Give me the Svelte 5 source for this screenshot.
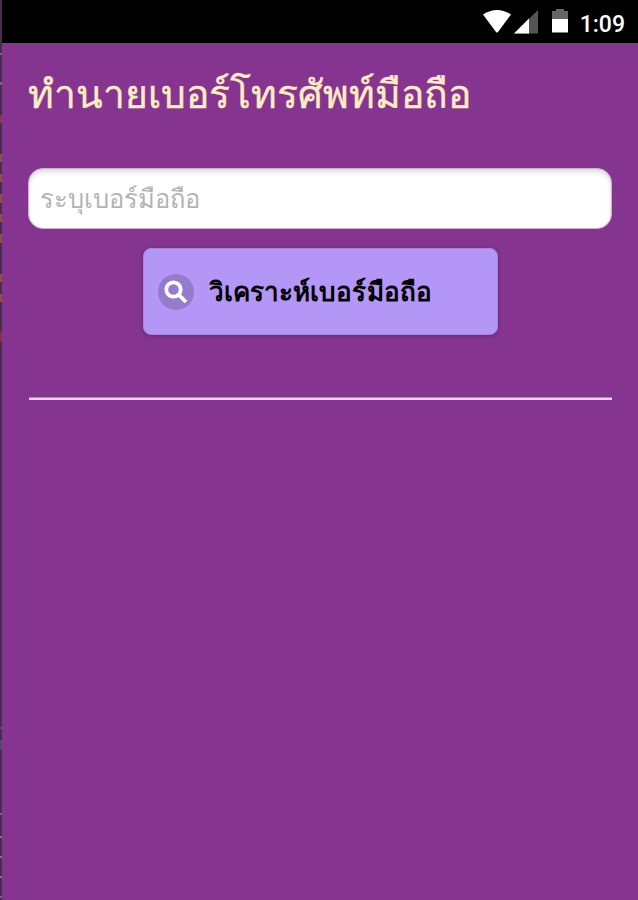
<script>
	let number = $state('');

	// marks along the strip on the left edge
	const marks = [
		{ y: 53, h: 2, color: '#75677b' },
		{ y: 82, h: 3, color: '#75677b' },
		{ y: 115, h: 8, color: '#89384f' },
		{ y: 154, h: 8, color: '#8a4f4b' },
		{ y: 174, h: 8, color: '#8a4f4b' },
		{ y: 194, h: 9, color: '#8a4f4b' },
		{ y: 214, h: 8, color: '#8a4f4b' },
		{ y: 234, h: 9, color: '#8a4f4b' },
		{ y: 274, h: 8, color: '#8a4f4b' },
		{ y: 294, h: 8, color: '#8a4f4b' },
		{ y: 332, h: 10, color: '#843150' },
		{ y: 727, h: 2, color: '#6c4577' },
		{ y: 740, h: 10, color: '#5b4767' },
		{ y: 813, h: 2, color: '#79607f' },
		{ y: 836, h: 2, color: '#8a758e' },
		{ y: 856, h: 2, color: '#8a758e' },
		{ y: 876, h: 2, color: '#8a758e' },
		{ y: 896, h: 2, color: '#79607f' }
	];
</script>

<div class="frame">
	<svg class="edge" width="2" height="900" viewBox="0 0 2 900">
		<rect width="2" height="900" fill="#4b2b52" />
		{#each marks as mark}
			<rect y={mark.y} width="2" height={mark.h} fill={mark.color} />
		{/each}
	</svg>

	<div class="app">
		<header class="status-bar">
			<svg width="90" height="30" viewBox="0 0 90 30">
				<path d="M1 6.5Q15-2.5 29 6.5L16 24Q15 25 14 24Z" fill="#fff" />
				<path d="M56 2V25.500H32Z" fill="#555" />
				<path d="M47 10.500V25.500H32Z" fill="#fff" />
				<path d="M74 1H82V3H86V11H70V3H74Z" fill="#666" />
				<path d="M70 11H86V24.500H70Z" fill="#fff" />
			</svg>
			<span class="time">1:09</span>
		</header>

		<main>
			<h1>ทำนายเบอร์โทรศัพท์มือถือ</h1>
			<input type="tel" placeholder="ระบุเบอร์มือถือ" bind:value={number} />
			<button type="button">
				<span class="icon">
					<svg width="24" height="24" viewBox="0 0 24 24">
						<circle cx="9.5" cy="9.5" r="7.2" />
						<path d="M14.8 14.8L22 22" />
					</svg>
				</span>
				<span class="label">วิเคราะห์เบอร์มือถือ</span>
			</button>
			<hr />
		</main>
	</div>
</div>

<style>
	:global(body) {
		margin: 0;
		background: #853590;
	}

	.frame {
		display: flex;
		width: 638px;
		height: 900px;
		overflow: hidden;
		background: #853590;
		font-family: monospace;
	}

	.edge {
		flex: none;
	}

	.app {
		flex: 1;
		min-width: 0;
	}

	.status-bar {
		display: flex;
		align-items: center;
		justify-content: flex-end;
		gap: 8px;
		box-sizing: border-box;
		height: 43px;
		padding: 3px 13px 0 0;
		background: #000;
		color: #fff;
	}

	.time {
		padding-top: 3px;
		font-family: Roboto, sans-serif;
		font-size: 23px;
		font-weight: 500;
		line-height: 30px;
	}

	main {
		display: flex;
		flex-direction: column;
		padding: 22px 26px 0;
	}

	h1 {
		margin: 0 0 43px;
		height: 60px;
		color: #ffebc4;
		font-size: 39px;
		font-weight: 400;
		line-height: 60px;
		white-space: nowrap;
		-webkit-text-stroke: 0.4px #ffebc4;
	}

	input {
		box-sizing: border-box;
		width: 584px;
		height: 61px;
		border: 1px solid #c9b0cd;
		border-radius: 15px;
		padding: 0 11px;
		background: #fff;
		box-shadow: inset 0 3px 5px rgba(0, 0, 0, 0.15);
		color: #333;
		font-family: inherit;
		font-size: 25.5px;
		outline: none;
	}

	input::placeholder {
		color: #b3b3b3;
		opacity: 1;
	}

	button {
		display: flex;
		align-items: center;
		align-self: center;
		gap: 15px;
		box-sizing: border-box;
		width: 355px;
		height: 87px;
		margin: 19px 0 62px;
		border: 1px solid #a583df;
		border-radius: 8px;
		padding: 0 14px;
		background: #b396f5;
		box-shadow: 0 1px 4px rgba(0, 0, 0, 0.25);
		color: #000;
		font-family: inherit;
		font-size: 26px;
		font-weight: 700;
		letter-spacing: 0.1px;
		white-space: nowrap;
	}

	.icon {
		display: flex;
		align-items: center;
		justify-content: center;
		width: 36px;
		height: 36px;
		border-radius: 50%;
		background: #957bcb;
	}

	.icon svg {
		fill: none;
		stroke: #fff;
		stroke-width: 3.8;
	}

	hr {
		box-sizing: border-box;
		width: 583px;
		height: 3px;
		margin: 0 0 0 1px;
		border: 0;
		border-top: 1px solid #b584bc;
		background: #e9d8eb;
	}
</style>
